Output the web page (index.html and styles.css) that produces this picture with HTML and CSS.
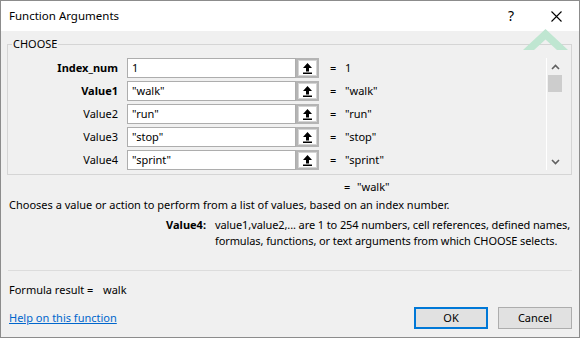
FILE: index.html
```html
<!DOCTYPE html>
<html lang="en">
<head>
<meta charset="UTF-8">
<title>Function Arguments</title>
<link rel="stylesheet" href="styles.css">
</head>
<body>

<div class="dialog">
  <div class="titlebar">
    <span class="title">Function Arguments</span>
    <span class="tb-btn help">?</span>
    <span class="tb-btn close">
      <svg width="11" height="11" viewBox="0 0 11 11"><path d="M0.5 0.5 L10.5 10.5 M10.5 0.5 L0.5 10.5" stroke="#000" stroke-width="1.1" fill="none"/></svg>
    </span>
  </div>

  <div class="content">
    <fieldset class="group">
      <legend>CHOOSE</legend>
      <div class="args">
        <div class="rows">
          <div class="row">
            <span class="arg req">Index_num</span>
            <span class="input">1</span>
            <span class="ref-btn"><svg width="9" height="11" viewBox="0 0 9 11"><path d="M4.5 0 L9 5 L6 5 L6 8.5 L3 8.5 L3 5 L0 5 Z M0 9.5 H9 V11 H0 Z" fill="#000"/></svg></span>
            <span class="eq">=</span>
            <span class="val">1</span>
          </div>
          <div class="row">
            <span class="arg req">Value1</span>
            <span class="input">"walk"</span>
            <span class="ref-btn"><svg width="9" height="11" viewBox="0 0 9 11"><path d="M4.5 0 L9 5 L6 5 L6 8.5 L3 8.5 L3 5 L0 5 Z M0 9.5 H9 V11 H0 Z" fill="#000"/></svg></span>
            <span class="eq">=</span>
            <span class="val">"walk"</span>
          </div>
          <div class="row">
            <span class="arg">Value2</span>
            <span class="input">"run"</span>
            <span class="ref-btn"><svg width="9" height="11" viewBox="0 0 9 11"><path d="M4.5 0 L9 5 L6 5 L6 8.5 L3 8.5 L3 5 L0 5 Z M0 9.5 H9 V11 H0 Z" fill="#000"/></svg></span>
            <span class="eq">=</span>
            <span class="val">"run"</span>
          </div>
          <div class="row">
            <span class="arg">Value3</span>
            <span class="input">"stop"</span>
            <span class="ref-btn"><svg width="9" height="11" viewBox="0 0 9 11"><path d="M4.5 0 L9 5 L6 5 L6 8.5 L3 8.5 L3 5 L0 5 Z M0 9.5 H9 V11 H0 Z" fill="#000"/></svg></span>
            <span class="eq">=</span>
            <span class="val">"stop"</span>
          </div>
          <div class="row">
            <span class="arg">Value4</span>
            <span class="input">"sprint"</span>
            <span class="ref-btn"><svg width="9" height="11" viewBox="0 0 9 11"><path d="M4.5 0 L9 5 L6 5 L6 8.5 L3 8.5 L3 5 L0 5 Z M0 9.5 H9 V11 H0 Z" fill="#000"/></svg></span>
            <span class="eq">=</span>
            <span class="val">"sprint"</span>
          </div>
        </div>

        <div class="scrollbar">
          <div class="sb-arrow"><svg width="9" height="6" viewBox="0 0 9 6"><path d="M1 5 L4.5 1.5 L8 5" stroke="#606060" stroke-width="1.6" fill="none"/></svg></div>
          <div class="sb-thumb"></div>
          <div class="sb-track"></div>
          <div class="sb-arrow"><svg width="9" height="6" viewBox="0 0 9 6"><path d="M1 1 L4.5 4.5 L8 1" stroke="#606060" stroke-width="1.6" fill="none"/></svg></div>
        </div>
      </div>
    </fieldset>

    <div class="total"><span class="eq">=</span><span>"walk"</span></div>

    <p class="summary">Chooses a value or action to perform from a list of values, based on an index number.</p>

    <div class="arg-help">
      <span class="arg-name">Value4:</span>
      <span class="arg-desc">value1,value2,... are 1 to 254 numbers, cell references, defined names,<br>formulas, functions, or text arguments from which CHOOSE selects.</span>
    </div>

    <div class="sep"></div>

    <div class="formula"><span class="formula-label">Formula result =</span><span>walk</span></div>

    <div class="footer">
      <a class="help-link" href="#">Help on this function</a>
      <button class="btn default">OK</button>
      <button class="btn">Cancel</button>
    </div>
  </div>

  <svg class="watermark" width="46" height="22" viewBox="0 0 46 22"><polygon points="22.5,0 45,21 34,21 22.5,10.5 11,21 0,21" fill="#bfe6d1"/></svg>
</div>

</body>
</html>
```

FILE: styles.css
```css
* {
  box-sizing: border-box;
}

body {
  margin: 0;
  font-family: "Noto Sans", sans-serif;
  font-size: 11px;
  line-height: 16px;
  color: #000;
}

.dialog {
  position: relative;
  width: 580px;
  height: 338px;
  border: 1px solid #8c8c8c;
  background: #f0f0f0;
  display: flex;
  flex-direction: column;
}

.titlebar {
  height: 30px;
  background: #fff;
  display: flex;
  align-items: center;
  padding-left: 8px;
  font-size: 11.5px;
}

.title {
  flex: 1;
}

.tb-btn {
  height: 30px;
  display: flex;
  align-items: center;
  justify-content: center;
  font-size: 14px;
}

.help {
  width: 44px;
}

.close {
  width: 46px;
}

.content {
  flex: 1;
  padding: 0 7px 0 6px;
  display: flex;
  flex-direction: column;
}

.group {
  margin: 6px 0 0 0;
  padding: 7px 0 4px 0;
  border: 1px solid #d5d5d5;
  min-width: 0;
}

.group legend {
  margin-left: 4px;
  padding: 0 1px;
  line-height: 14px;
}

.args {
  display: flex;
}

.rows {
  display: flex;
  flex-direction: column;
  gap: 3px;
}

.row {
  display: flex;
  align-items: center;
  height: 20px;
}

.arg {
  flex: none;
  width: 110px;
  margin-right: 9px;
  text-align: right;
}

.req {
  font-weight: bold;
}

.input {
  flex: none;
  width: 169px;
  height: 20px;
  border: 1px solid #adadad;
  background: #fff;
  padding-left: 4px;
  line-height: 18px;
}

.ref-btn {
  flex: none;
  width: 23px;
  height: 20px;
  border: 2px solid #b4b4b4;
  background: #fff;
  box-shadow: inset 0 0 0 1px #d4d4d4;
  display: flex;
  align-items: center;
  justify-content: center;
}

.row .eq {
  flex: none;
  margin-left: 11px;
  width: 15px;
}

.scrollbar {
  margin-left: auto;
  margin-right: 8px;
  width: 17px;
  border-left: 1px solid #fff;
  display: flex;
  flex-direction: column;
}

.sb-arrow {
  height: 17px;
  display: flex;
  align-items: center;
  justify-content: center;
}

.sb-thumb {
  height: 17px;
  margin: 0 1px;
  background: #cdcdcd;
}

.sb-track {
  flex: 1;
}

.total {
  margin: 4px 0 0 337px;
  display: flex;
}

.total .eq {
  width: 13px;
}

.summary {
  margin: 2px 0 0 2px;
}

.arg-help {
  margin-top: 4px;
  display: flex;
  white-space: nowrap;
}

.arg-name {
  flex: none;
  width: 199px;
  text-align: right;
  font-weight: bold;
}

.arg-desc {
  margin-left: 9px;
  letter-spacing: -0.1px;
}

.sep {
  margin: 21px 0 0 1px;
  height: 1px;
  background: #dcdcdc;
}

.formula {
  margin: 11px 0 0 2px;
  display: flex;
}

.formula-label {
  flex: none;
  width: 94px;
}

.footer {
  margin: 9px 0 0 2px;
  height: 22px;
  display: flex;
  align-items: center;
  gap: 10px;
}

.help-link {
  margin-right: auto;
  color: #0066cc;
}

.btn {
  width: 74px;
  height: 22px;
  padding: 0;
  border: 1px solid #adadad;
  background: #e1e1e1;
  font: inherit;
  color: #000;
}

.btn.default {
  border: 2px solid #0078d7;
}

.watermark {
  position: absolute;
  left: 522px;
  top: 28px;
}
```
